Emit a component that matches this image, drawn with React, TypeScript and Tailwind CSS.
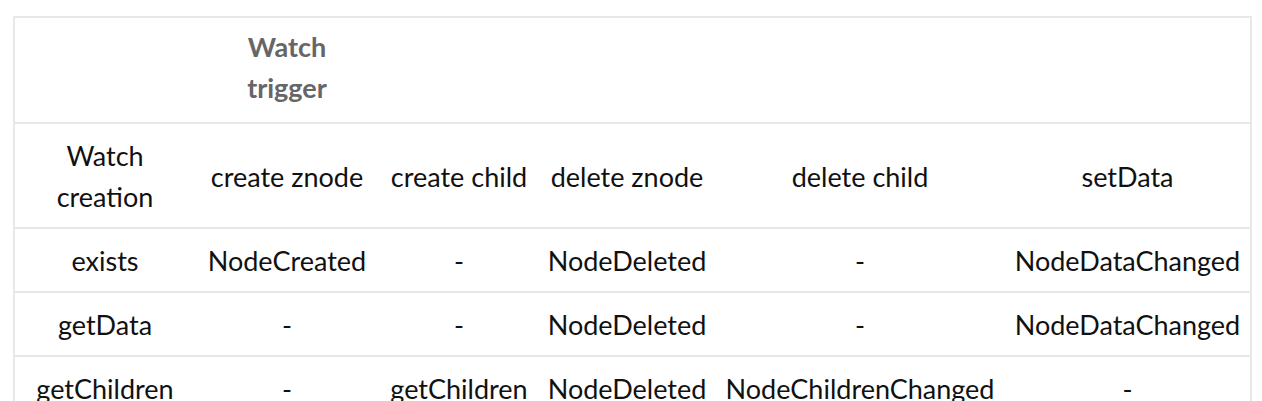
import React from "react";

const COLS = [181, 184, 160, 176, 290, 246];

const ROWS: string[][] = [
  ["Watch creation", "create znode", "create child", "delete znode", "delete child", "setData"],
  ["exists", "NodeCreated", "-", "NodeDeleted", "-", "NodeDataChanged"],
  ["getData", "-", "-", "NodeDeleted", "-", "NodeDataChanged"],
  ["getChildren", "-", "getChildren", "NodeDeleted", "NodeChildrenChanged", "-"],
];

export default function App() {
  return (
    <div className="bg-white min-h-screen pl-[13px] pt-[16px] font-['Lato',sans-serif] text-[27px] leading-[41px] text-[#111]">
      <table className="table-fixed border-collapse border-2 border-[#e8e8e8] w-[1238px]">
        <colgroup>
          {COLS.map((w, i) => (
            <col key={i} style={{ width: w }} />
          ))}
        </colgroup>
        <thead>
          <tr className="border-b-2 border-[#e8e8e8]">
            <th className="pt-[8px] pb-[14px]" />
            <th className="pt-[8px] pb-[14px] px-[40px] font-bold text-[#666] text-center">Watch trigger</th>
            <th />
            <th />
            <th />
            <th />
          </tr>
        </thead>
        <tbody>
          {ROWS.map((row, r) => (
            <tr key={r} className="border-b-2 border-[#e8e8e8]">
              {row.map((cell, c) => (
                <td
                  key={c}
                  className={`pt-[11px] pb-[10px] text-center align-middle ${
                    c === 0 && r === 0 ? "whitespace-normal px-[30px]" : "whitespace-nowrap px-0"
                  }`}
                >
                  {cell}
                </td>
              ))}
            </tr>
          ))}
        </tbody>
      </table>
    </div>
  );
}
